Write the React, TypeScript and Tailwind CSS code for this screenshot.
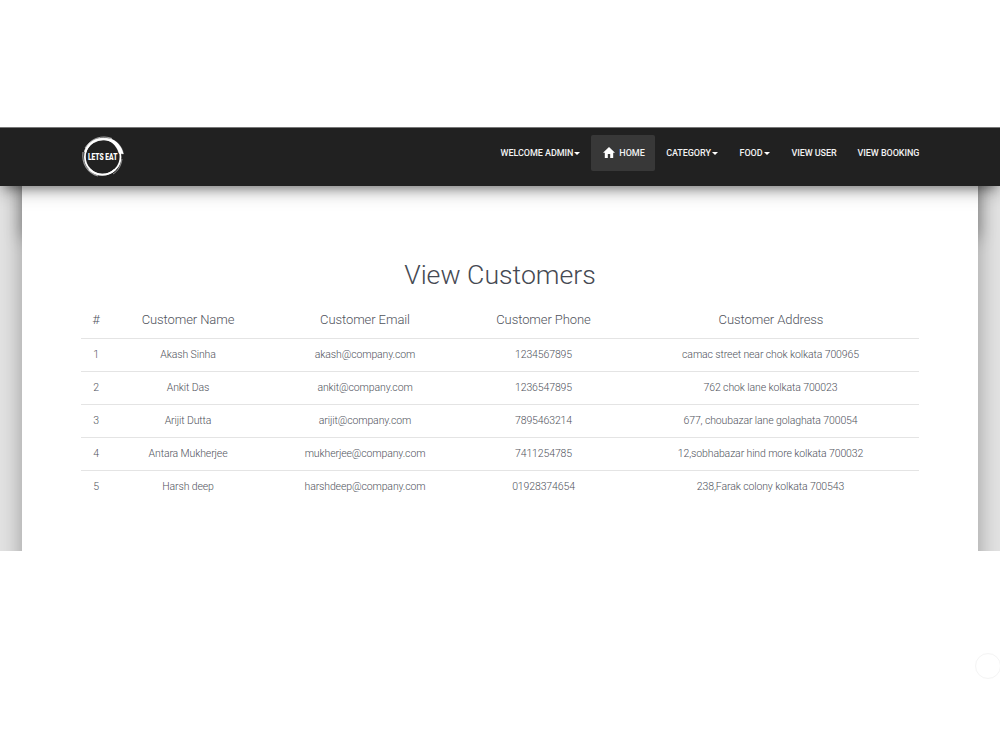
const customers = [
  { id: 1, name: "Akash Sinha", email: "akash@company.com", phone: "1234567895", address: "camac street near chok kolkata 700965" },
  { id: 2, name: "Ankit Das", email: "ankit@company.com", phone: "1236547895", address: "762 chok lane kolkata 700023" },
  { id: 3, name: "Arijit Dutta", email: "arijit@company.com", phone: "7895463214", address: "677, choubazar lane golaghata 700054" },
  { id: 4, name: "Antara Mukherjee", email: "mukherjee@company.com", phone: "7411254785", address: "12,sobhabazar hind more kolkata 700032" },
  { id: 5, name: "Harsh deep", email: "harshdeep@company.com", phone: "01928374654", address: "238,Farak colony kolkata 700543" },
];

function Logo() {
  return (
    <svg width="46" height="46" viewBox="0 0 46 46" fill="none" stroke="#fff">
      <circle cx="22.700" cy="22.9" r="17.8" strokeWidth="1.8" />
      <path d="M5 18C8 9 16 5 24 5c7 0 12 3 15 9" strokeWidth="2.4" opacity=".9" />
      <path d="M5 14C11 4 22 .8 32 4.500" strokeWidth="1" opacity=".6" />
      <path d="M3 18C1.500 30 8 39 18 42" strokeWidth="1.2" opacity=".55" />
      <path d="M9 35c7 7 18 8 26 .5" strokeWidth="1.8" />
      <path d="M30 4.500c6 2 12 7 13.500 15.500l-4.500-.5C37.500 14 34 9 29 6.500z" fill="#fff" strokeWidth=".3" />
      <path d="M42 25c-1 7-4 12-9 15" strokeWidth="1" opacity=".5" />
      <text x="22.700" y="25.900" textAnchor="middle" textLength="29.500" lengthAdjust="spacingAndGlyphs" fill="#fff" stroke="none" fontFamily="Roboto, sans-serif" fontSize="8.200" fontWeight="900">
        LETS EAT
      </text>
    </svg>
  );
}

function Caret() {
  return <span className="ml-[1px] border-x-[3px] border-t-[3px] border-x-transparent border-t-white" />;
}

function HomeIcon() {
  return (
    <svg className="mr-1 mb-[2px]" width="12" height="11" viewBox="2 3 20 17" fill="#fff" preserveAspectRatio="none">
      <path d="M10 20v-6h4v6h5v-8h3L12 3 2 12h3v8z" />
    </svg>
  );
}

function Navbar() {
  return (
    <nav className="relative z-10 flex h-[59px] justify-between border-t border-[#777] bg-[#212121] pr-[71px] pl-[80px] shadow-[0_4px_18px_0_rgba(0,0,0,0.3),0_7px_10px_-5px_rgba(0,0,0,0.35)] [clip-path:inset(0_0_-40px_0)]">
      <div className="pt-[6px]">
        <Logo />
      </div>
      <div className="mt-[7px] flex h-9 text-[9px] font-medium tracking-[-0.05px] text-[#f2f2f2]">
        <a className="flex w-[101px] items-center justify-center pt-px whitespace-nowrap">WELCOME ADMIN<Caret /></a>
        <a className="flex w-16 items-center justify-center rounded-[2px] bg-[#383838] pt-px pl-[2px]"><HomeIcon />HOME</a>
        <a className="flex w-[74px] items-center justify-center pt-px">CATEGORY<Caret /></a>
        <a className="flex w-[51px] items-center justify-center pt-px">FOOD<Caret /></a>
        <a className="flex w-[68px] items-center justify-center pt-px whitespace-nowrap">VIEW USER</a>
        <a className="flex w-[81px] items-center justify-center pt-px whitespace-nowrap">VIEW BOOKING</a>
      </div>
    </nav>
  );
}

function CustomerTable() {
  return (
    <table className="w-full table-fixed border-collapse text-center text-[10.5px] font-light tracking-[-0.12px] text-[#50535c]">
      <colgroup>
        <col className="w-[30px]" />
        <col className="w-[154px]" />
        <col className="w-[200px]" />
        <col className="w-[157px]" />
        <col />
      </colgroup>
      <thead>
        <tr className="h-[35px] text-[13px] tracking-[-0.08px]">
          <th className="pb-[2px] font-light">#</th>
          <th className="pb-[2px] font-light">Customer Name</th>
          <th className="pb-[2px] font-light">Customer Email</th>
          <th className="pb-[2px] font-light">Customer Phone</th>
          <th className="pb-[2px] pl-px font-light">Customer Address</th>
        </tr>
      </thead>
      <tbody>
        {customers.map((c) => (
          <tr key={c.id} className="h-[33px] border-t border-[#e4e4e4]">
            <td>{c.id}</td>
            <td>{c.name}</td>
            <td>{c.email}</td>
            <td>{c.phone}</td>
            <td>{c.address}</td>
          </tr>
        ))}
      </tbody>
    </table>
  );
}

export default function App() {
  return (
    <div className="relative h-[750px] overflow-hidden bg-white pt-[127px] font-[Roboto,sans-serif]">
      <Navbar />
      <main className="relative h-[365px] overflow-hidden bg-[#e2e2e2] px-[22px]">
        <div className="absolute inset-x-[22px] -top-10 h-[88px] shadow-[0_4px_16px_0_rgba(0,0,0,0.35)]" />
        <div className="relative -mt-10 h-[500px] bg-white px-[59px] pt-[112px] shadow-[0_0_18px_3px_rgba(0,0,0,0.26)]">
          <h2 className="text-center text-[26.7px] leading-[34px] font-light text-[#454952]">View Customers</h2>
          <div className="pt-[11px]">
            <CustomerTable />
          </div>
        </div>
      </main>
      <div className="absolute top-[653px] left-[975px] size-[26px] rounded-full border border-[#f4f4f4]" />
    </div>
  );
}
